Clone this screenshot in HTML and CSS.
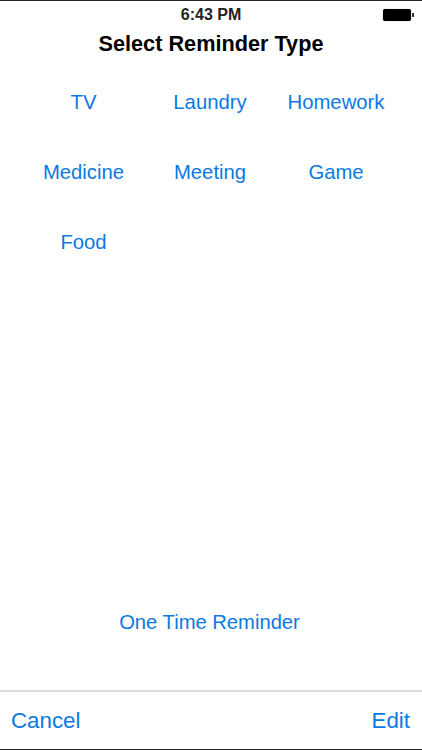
FILE: index.html
```html
<!DOCTYPE html>
<html lang="en">
<head>
    <meta charset="UTF-8">
    <meta name="viewport" content="width=device-width, initial-scale=1.0">
    <title>Select Reminder Type</title>
    <link rel="stylesheet" href="styles.css">
</head>
<body>
    <div class="screen">
        <div class="status-bar">
            <span class="time">6:43 PM</span>
            <div class="battery">
                <div class="battery-body"></div>
                <div class="battery-tip"></div>
            </div>
        </div>
        <h1 class="title">Select Reminder Type</h1>
        <div class="types">
            <a class="type">TV</a>
            <a class="type">Laundry</a>
            <a class="type">Homework</a>
            <a class="type">Medicine</a>
            <a class="type">Meeting</a>
            <a class="type">Game</a>
            <a class="type">Food</a>
        </div>
        <a class="one-time">One Time Reminder</a>
        <div class="toolbar">
            <a class="tool">Cancel</a>
            <a class="tool">Edit</a>
        </div>
    </div>
</body>
</html>
```
FILE: styles.css
```css
body {
    margin: 0;
    background-color: white;
    font-family: "Liberation Sans", Arial, sans-serif;
}

.screen {
    width: 422px;
    height: 750px;
    box-sizing: border-box;
    border-top: 1px solid #222;
    border-bottom: 1px solid #222;
    display: flex;
    flex-direction: column;
    overflow: hidden;
}

.status-bar {
    height: 28px;
    display: flex;
    align-items: center;
    justify-content: center;
    position: relative;
}

.time {
    font-size: 16px;
    font-weight: bold;
    color: #222;
}

.battery {
    position: absolute;
    right: 8px;
    top: 8px;
    display: flex;
    align-items: center;
}

.battery-body {
    width: 28px;
    height: 12px;
    background-color: black;
    border-radius: 2px;
    box-shadow: 0 0 1px #777;
}

.battery-tip {
    width: 2px;
    height: 4px;
    margin-left: 1px;
    background-color: #333;
}

.title {
    margin: 0;
    height: 30px;
    line-height: 30px;
    font-size: 21.7px;
    font-weight: bold;
    text-align: center;
    color: black;
}

.types {
    margin-top: 28px;
    padding: 0 21px;
    display: grid;
    grid-template-columns: 125px 128px 124px;
    grid-auto-rows: 70px;
    height: 420px;
}

.type {
    height: 30px;
    line-height: 30px;
    text-align: center;
    font-size: 20.3px;
    color: #0a7ae2;
}

.one-time {
    margin-top: 100px;
    padding-right: 3px;
    height: 30px;
    line-height: 30px;
    text-align: center;
    font-size: 20.2px;
    color: #0a7ae2;
}

.toolbar {
    margin-top: auto;
    height: 57px;
    border-top: 2px solid #dcdcde;
    padding: 0 12px 0 11px;
    display: flex;
    align-items: center;
    justify-content: space-between;
}

.tool {
    font-size: 22.3px;
    color: #0a7ae2;
}
```
